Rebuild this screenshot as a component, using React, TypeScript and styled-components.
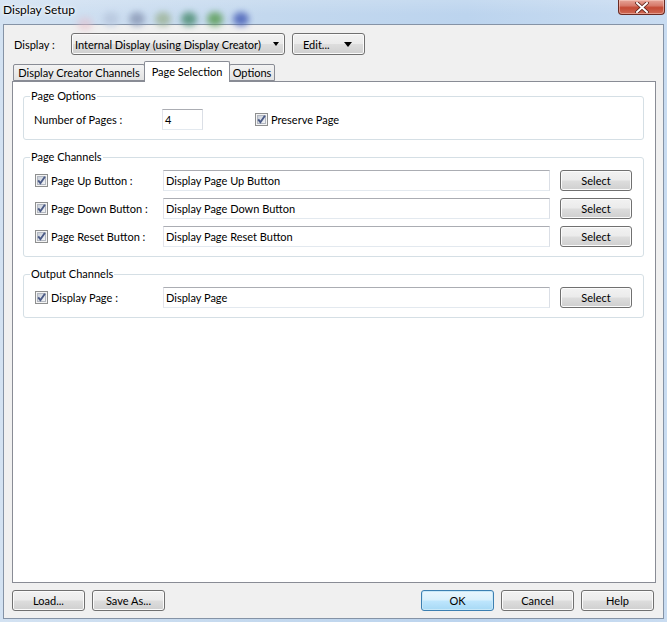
import React from "react";
import styled, { createGlobalStyle } from "styled-components";

const FONT = `"Lato", "Noto Sans", "Liberation Sans", sans-serif`;

const GlobalStyle = createGlobalStyle`
  html, body {
    margin: 0;
    padding: 0;
    background: #cbdcef;
  }
  * {
    box-sizing: border-box;
  }
`;

const CheckBox = () => (
  <CheckSvg width="13" height="13" viewBox="0 0 13 13">
    <defs>
      <linearGradient id="cbfill" x1="0" y1="0" x2="1" y2="1">
        <stop offset="0" stopColor="#c6ccd6" />
        <stop offset="1" stopColor="#f6f7f9" />
      </linearGradient>
    </defs>
    <rect x="0.5" y="0.5" width="12" height="12" fill="#f4f4f4" stroke="#8e8f8f" />
    <rect x="2.5" y="2.5" width="8" height="8" fill="url(#cbfill)" stroke="#b2b7c0" />
    <path d="M3.2 6.4 L5.4 9.2 L9.9 2.8" fill="none" stroke="#4a5a86" strokeWidth="1.9" />
  </CheckSvg>
);

const CloseGlyph = () => (
  <svg width="14" height="11" viewBox="0 0 14 11">
    <path d="M2 1 L12 10 M12 1 L2 10" stroke="#5a2019" strokeWidth="3.6" strokeLinecap="square" />
    <path d="M2 1 L12 10 M12 1 L2 10" stroke="#ffffff" strokeWidth="2" strokeLinecap="square" />
  </svg>
);

// blurred desktop icons showing through the glass title bar
const blobs = ["#e7b7c4", "#b8c7de", "#8d9bb8", "#9fb59a", "#4e8e74", "#5d9e58", "#4a61b8"];

const Row = ({ label, value }: { label: string; value: string }) => (
  <>
    <CheckLabel>
      <CheckBox />
      <span>{label}</span>
    </CheckLabel>
    <TextField>{value}</TextField>
    <PushButton>Select</PushButton>
  </>
);

const App = () => {
  return (
    <>
      <GlobalStyle />
      <Window>
        <TitleBar>
          <Title>Display Setup</Title>
          <BlobRow>
            {blobs.map((c, i) => (
              <Blob key={i} $color={c} $low={i === 0} />
            ))}
          </BlobRow>
          <CloseButton>
            <CloseGlyph />
          </CloseButton>
        </TitleBar>
        <Client>
          <TopRow>
            <FieldLabel>Display :</FieldLabel>
            <DropButton $width={214} $padLeft={3} $padRight={5}>
              <span>Internal Display (using Display Creator)</span>
              <Arrow $w={7} $h={4} />
            </DropButton>
            <DropButton $width={73} $padLeft={10} $padRight={12}>
              <span>Edit...</span>
              <Arrow $w={9} $h={5} />
            </DropButton>
          </TopRow>
          <TabStrip>
            <Tab $width={132}>Display Creator Channels</Tab>
            <Tab $width={86} $active>
              Page Selection
            </Tab>
            <Tab $width={46}>Options</Tab>
          </TabStrip>
          <TabPanel>
            <GroupBox>
              <GroupTitle>Page Options</GroupTitle>
              <OptionsRow>
                <PlainLabel>Number of Pages :</PlainLabel>
                <TextField $width={41}>4</TextField>
                <CheckLabel $offset={52}>
                  <CheckBox />
                  <span>Preserve Page</span>
                </CheckLabel>
              </OptionsRow>
            </GroupBox>
            <GroupBox>
              <GroupTitle>Page Channels</GroupTitle>
              <ChannelGrid>
                <Row label="Page Up Button :" value="Display Page Up Button" />
                <Row label="Page Down Button :" value="Display Page Down Button" />
                <Row label="Page Reset Button :" value="Display Page Reset Button" />
              </ChannelGrid>
            </GroupBox>
            <GroupBox>
              <GroupTitle>Output Channels</GroupTitle>
              <ChannelGrid>
                <Row label="Display Page :" value="Display Page" />
              </ChannelGrid>
            </GroupBox>
          </TabPanel>
          <Footer>
            <ButtonGroup>
              <PushButton $width={73}>Load...</PushButton>
              <PushButton $width={73}>Save As...</PushButton>
            </ButtonGroup>
            <ButtonGroup>
              <PushButton $width={73} $default>
                OK
              </PushButton>
              <PushButton $width={73}>Cancel</PushButton>
              <PushButton $width={73}>Help</PushButton>
            </ButtonGroup>
          </Footer>
        </Client>
      </Window>
    </>
  );
};

export default App;

const Window = styled.div`
  width: 667px;
  height: 622px;
  display: flex;
  flex-direction: column;
  font-family: ${FONT};
  font-size: 11px;
  color: #000;
  background: linear-gradient(90deg, #d3e2f2 0%, #c3d8ee 40%, #bcd4ee 70%, #c9dcf1 100%);
  overflow: hidden;
`;

const TitleBar = styled.div`
  height: 24px;
  flex: 0 0 24px;
  display: flex;
  align-items: flex-start;
  background: linear-gradient(180deg, rgba(255, 255, 255, 0.15) 0%, rgba(255, 255, 255, 0) 60%);
`;

const Title = styled.div`
  flex: 0 0 62px;
  padding: 2px 0 0 3px;
  font-size: 12px;
  line-height: 16px;
  white-space: nowrap;
  text-shadow: 0 0 6px #ffffff, 0 0 3px #ffffff;
`;

const BlobRow = styled.div`
  display: flex;
  align-items: center;
  gap: 10px;
  padding: 7px 0 0 2px;
  flex: 1;
`;

const Blob = styled.span<{ $color: string; $low?: boolean }>`
  width: 16px;
  height: 14px;
  border-radius: 50%;
  background: ${(p) => p.$color};
  filter: blur(3px);
  opacity: ${(p) => (p.$low ? 0.45 : 0.85)};
  margin-top: ${(p) => (p.$low ? "10px" : "0")};
`;

const CloseButton = styled.div`
  width: 47px;
  height: 15px;
  margin-right: 2px;
  border: 1px solid #6a2a22;
  border-top: none;
  border-radius: 0 0 4px 4px;
  background: linear-gradient(180deg, #e6a598 0%, #d77a6b 40%, #c44a35 55%, #cf6a55 100%);
  box-shadow: inset 0 0 0 1px rgba(255, 220, 210, 0.45);
  display: flex;
  align-items: center;
  justify-content: center;
`;

const Client = styled.div`
  flex: 1;
  margin: 0 3px 3px 3px;
  border: 1px solid #8593a6;
  background: #f0f0f0;
  padding: 8px 7px 7px 8px;
  display: flex;
  flex-direction: column;
`;

const TopRow = styled.div`
  height: 22px;
  display: flex;
  align-items: center;
`;

const FieldLabel = styled.span`
  width: 59px;
  padding-left: 2px;
`;

const buttonFace = `
  border: 1px solid #707070;
  border-radius: 3px;
  background: linear-gradient(180deg, #f2f2f2 0%, #ebebeb 48%, #dddddd 52%, #cfcfcf 100%);
  box-shadow: inset 0 0 0 1px #fbfbfb;
`;

const DropButton = styled.div<{ $width: number; $padLeft: number; $padRight: number }>`
  ${buttonFace}
  width: ${(p) => p.$width}px;
  height: 22px;
  margin-right: 7px;
  padding: 0 ${(p) => p.$padRight}px 0 ${(p) => p.$padLeft}px;
  display: flex;
  align-items: center;
  justify-content: space-between;
  white-space: nowrap;
`;

const Arrow = styled.span<{ $w: number; $h: number }>`
  width: 0;
  height: 0;
  border-left: ${(p) => p.$w / 2}px solid transparent;
  border-right: ${(p) => p.$w / 2}px solid transparent;
  border-top: ${(p) => p.$h}px solid #000;
`;

const TabStrip = styled.div`
  margin-top: 6px;
  height: 20px;
  display: flex;
  align-items: flex-end;
  padding-left: 1px;
`;

const Tab = styled.div<{ $width: number; $active?: boolean }>`
  width: ${(p) => p.$width}px;
  height: ${(p) => (p.$active ? 21 : 17)}px;
  margin-left: ${(p) => (p.$active ? -1 : 0)}px;
  margin-right: ${(p) => (p.$active ? -1 : 0)}px;
  margin-bottom: ${(p) => (p.$active ? -1 : 0)}px;
  position: relative;
  z-index: ${(p) => (p.$active ? 2 : 1)};
  border: 1px solid #898c95;
  border-bottom: ${(p) => (p.$active ? "none" : "1px solid #898c95")};
  border-radius: 2px 2px 0 0;
  background: ${(p) =>
    p.$active ? "#ffffff" : "linear-gradient(180deg, #f3f3f3 0%, #ebebeb 50%, #e2e2e2 100%)"};
  display: flex;
  align-items: center;
  justify-content: center;
  padding-bottom: ${(p) => (p.$active ? 2 : 0)}px;
  white-space: nowrap;
`;

const TabPanel = styled.div`
  flex: 1;
  border: 1px solid #898c95;
  background: #ffffff;
  padding: 6px 11px 0 10px;
  display: flex;
  flex-direction: column;
  gap: 9px;
`;

const GroupBox = styled.fieldset`
  margin: 0;
  min-width: 0;
  border: 1px solid #d5dfe5;
  border-radius: 3px;
  padding: 5px 11px 9px 11px;
`;

const GroupTitle = styled.legend`
  margin-left: -5px;
  padding: 0 1px;
  line-height: 16px;
`;

const OptionsRow = styled.div`
  height: 21px;
  display: flex;
  align-items: center;
`;

const PlainLabel = styled.span`
  width: 128px;
  margin-left: -1px;
`;

const ChannelGrid = styled.div`
  display: grid;
  grid-template-columns: 118px 1fr 72px;
  gap: 7px 10px;
  align-items: center;
`;

const CheckLabel = styled.label<{ $offset?: number }>`
  display: flex;
  align-items: center;
  gap: 3px;
  margin-left: ${(p) => p.$offset ?? 0}px;
  white-space: nowrap;
`;

const CheckSvg = styled.svg`
  flex: 0 0 13px;
  display: block;
`;

const TextField = styled.div<{ $width?: number }>`
  height: 21px;
  ${(p) => (p.$width ? `width: ${p.$width}px;` : "")}
  border: 1px solid #e2e3ea;
  border-top-color: #abadb3;
  border-right-color: #dbdfe6;
  border-bottom-color: #e3e9ef;
  background: #ffffff;
  padding: 0 2px;
  display: flex;
  align-items: center;
  white-space: nowrap;
  overflow: hidden;
`;

const PushButton = styled.div<{ $width?: number; $default?: boolean }>`
  ${buttonFace}
  ${(p) => (p.$width ? `width: ${p.$width}px;` : "")}
  height: 21px;
  display: flex;
  align-items: center;
  justify-content: center;
  white-space: nowrap;
  ${(p) =>
    p.$default &&
    `
    border-color: #3c7fb1;
    background: linear-gradient(180deg, #eaf6fd 0%, #d9f0fc 48%, #bee6fd 52%, #a7d9f5 100%);
    box-shadow: inset 0 0 0 1px #c8e8f8;
  `}
`;

const Footer = styled.div`
  margin-top: 7px;
  margin-right: 2px;
  display: flex;
  justify-content: space-between;
`;

const ButtonGroup = styled.div`
  display: flex;
  gap: 7px;
`;
